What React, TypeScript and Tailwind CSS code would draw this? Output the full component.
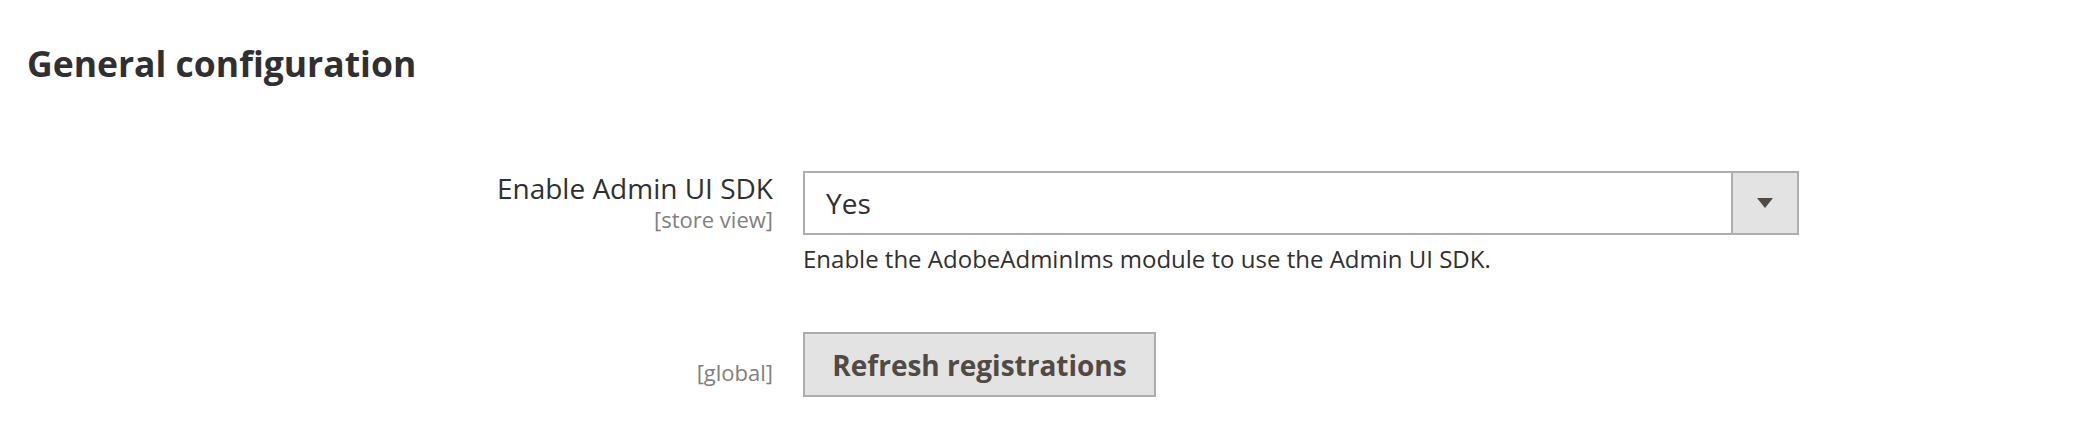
export default function App() {
  return (
    <div className="min-h-[440px] bg-white font-['Open_Sans',sans-serif] text-[#303030]">
      <div className="px-[27px] pt-[39px]">
        <h2 className="text-[35.5px] leading-[48px] font-bold text-[#303030]">General configuration</h2>
      </div>

      <div className="mt-[84px] flex">
        <div className="w-[803px] shrink-0 pr-[30px] text-right">
          <div className="text-[28px] leading-[34px]">Enable Admin UI SDK</div>
          <div className="text-[22px] leading-[28px] text-[#808080]">[store view]</div>
        </div>
        <div className="w-[996px] shrink-0">
          <div className="flex h-[64px] border-2 border-[#adadad] bg-white">
            <div className="flex flex-1 items-center pl-[21px] text-[28px] text-[#303030]">Yes</div>
            <div className="flex w-[66px] items-center justify-center border-l-2 border-[#adadad] bg-[#e3e3e3]">
              <svg width="16" height="10" viewBox="0 0 16 10">
                <path d="M0 0 H16 L8 10 Z" fill="#514943" />
              </svg>
            </div>
          </div>
          <p className="mt-[6px] text-[24px] leading-[36px] text-[#303030]">
            Enable the AdobeAdminIms module to use the Admin UI SDK.
          </p>
        </div>
      </div>

      <div className="mt-[55px] flex">
        <div className="w-[803px] shrink-0 pr-[30px] pt-[26px] text-right">
          <div className="text-[22px] leading-[28px] text-[#808080]">[global]</div>
        </div>
        <div>
          <button className="flex h-[65px] w-[353px] items-center justify-center border-2 border-[#adadad] bg-[#e3e3e3] text-[28px] font-bold text-[#514943]">
            Refresh registrations
          </button>
        </div>
      </div>
    </div>
  )
}
